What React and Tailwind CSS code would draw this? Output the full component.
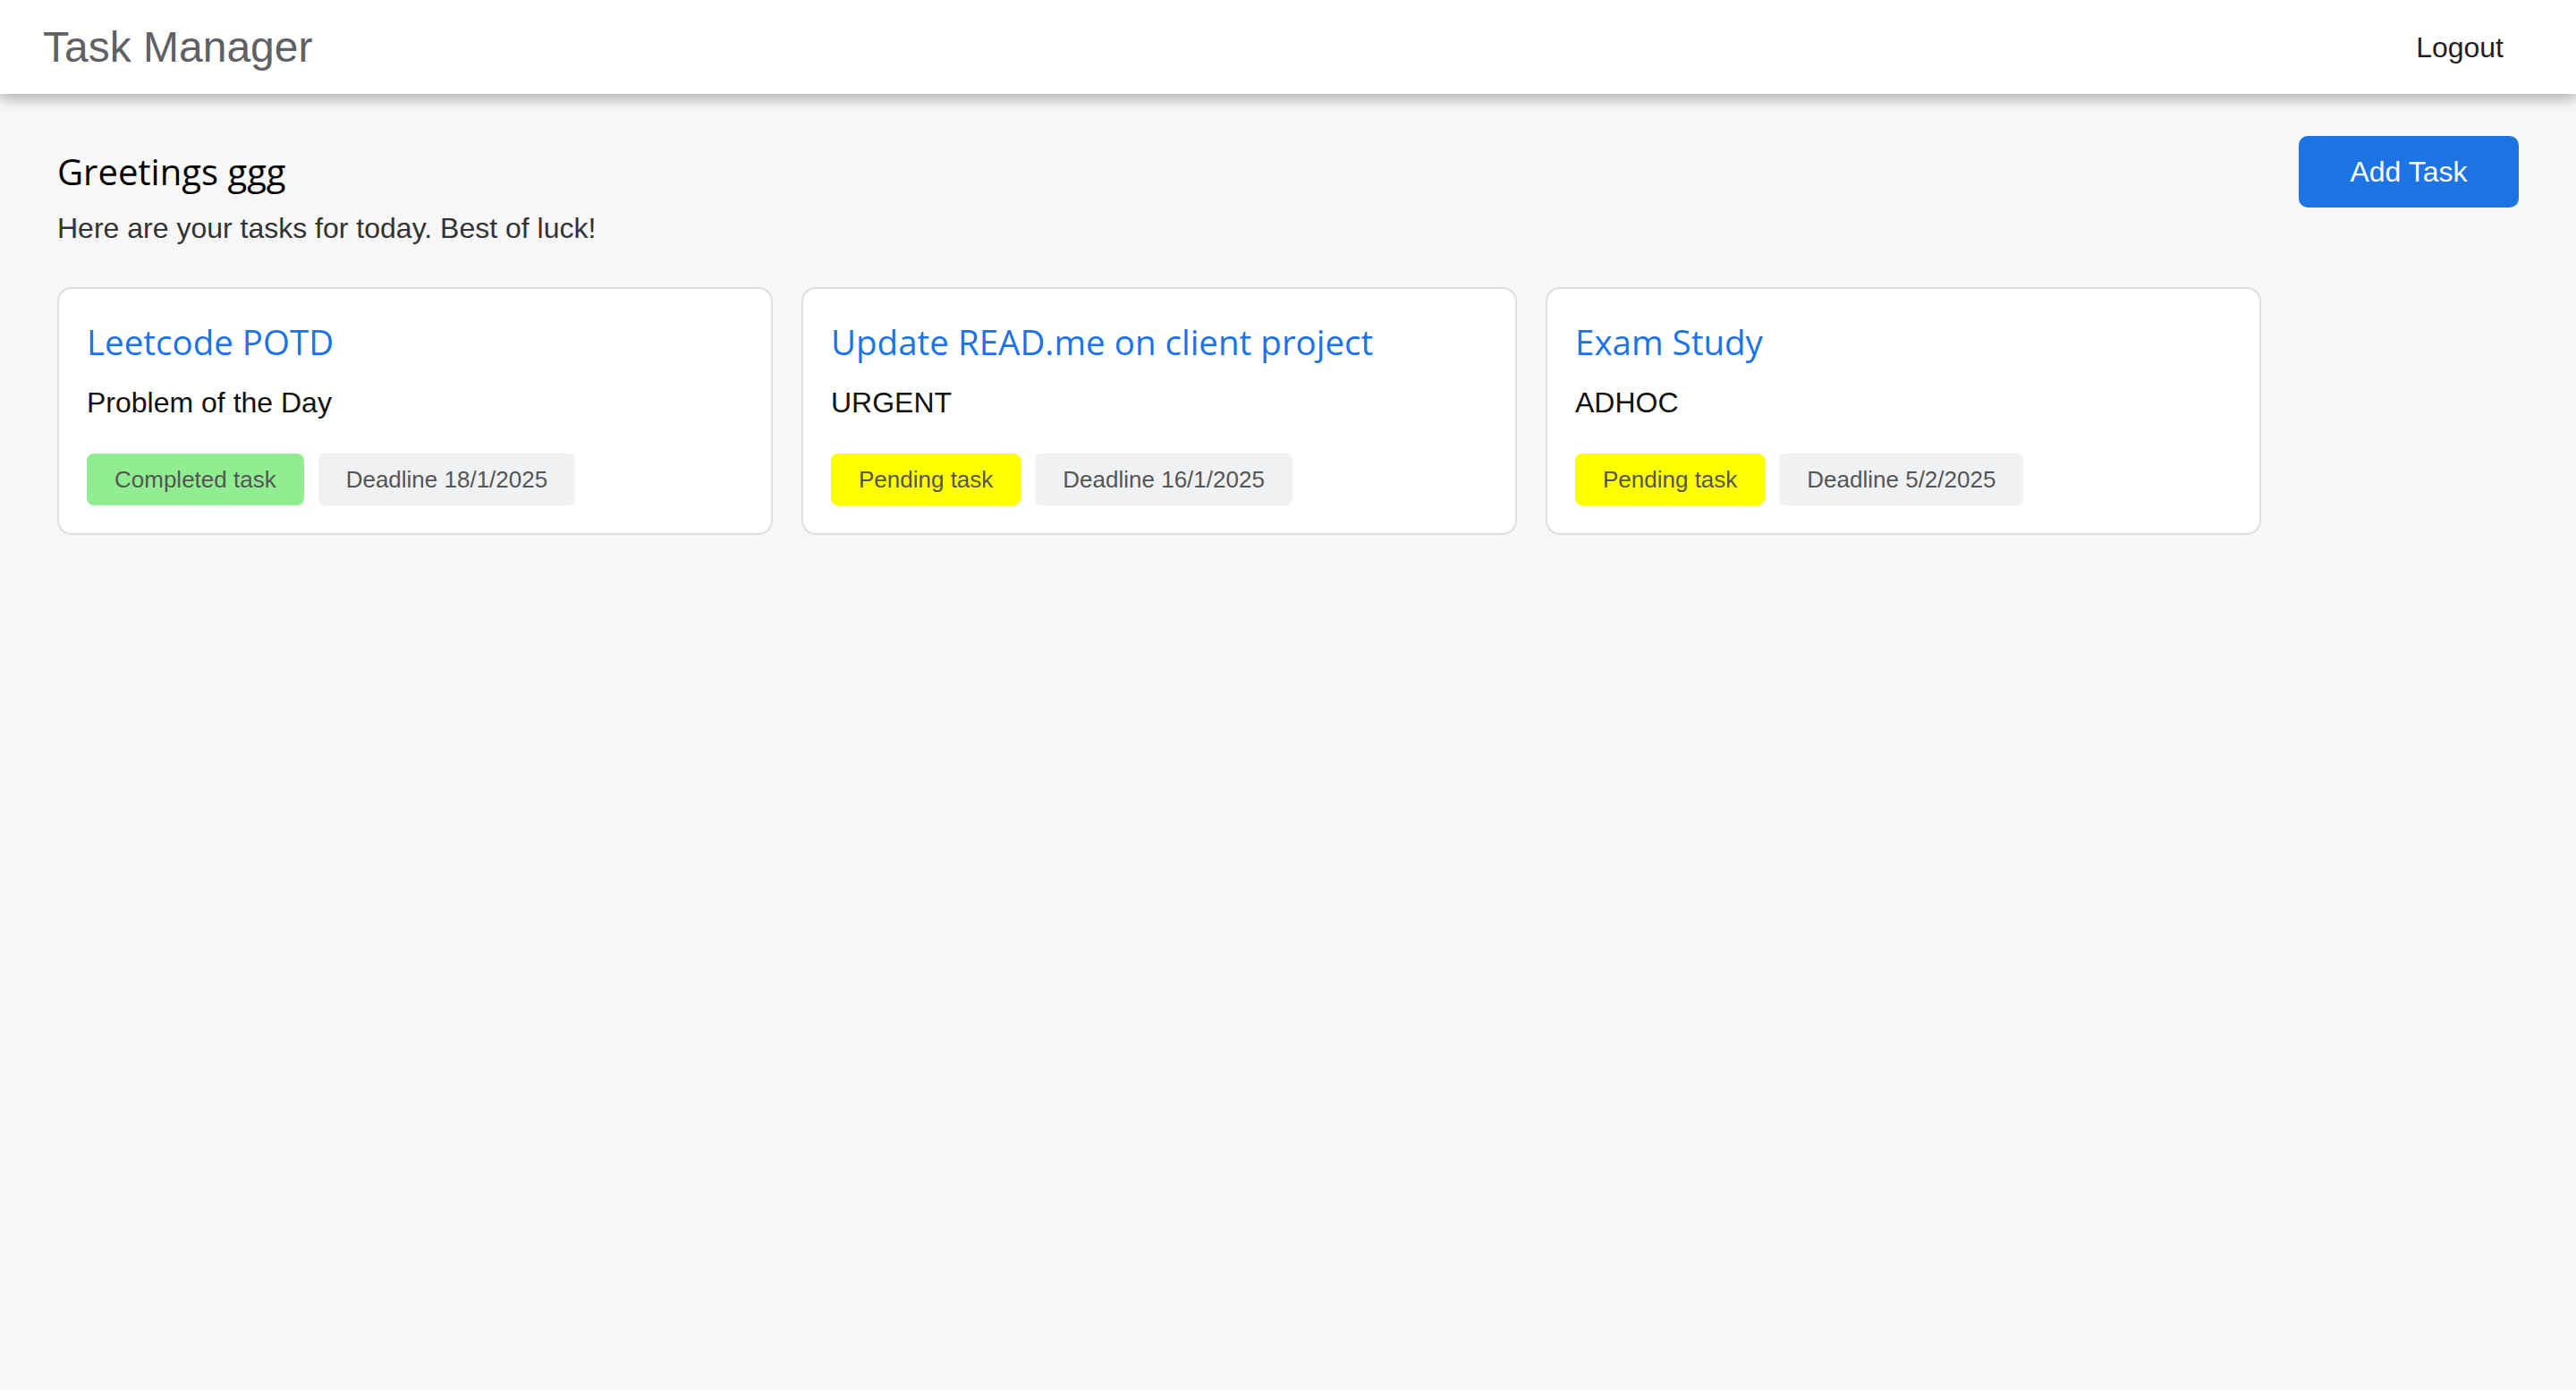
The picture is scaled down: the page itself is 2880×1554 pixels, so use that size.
const tasks = [
  { title: 'Leetcode POTD', desc: 'Problem of the Day', done: true, deadline: '18/1/2025' },
  { title: 'Update READ.me on client project', desc: 'URGENT', done: false, deadline: '16/1/2025' },
  { title: 'Exam Study', desc: 'ADHOC', done: false, deadline: '5/2/2025' },
];

const TaskCard = ({ task }) => (
  <div className="w-[800px] rounded-2xl border-2 border-[#dedede] bg-white px-[31px] pt-[33px] pb-[31px]">
    <h3 className="font-['Open_Sans',sans-serif] text-[38.5px] leading-[52px] text-[#1a73e8]">{task.title}</h3>
    <p className="mt-[24px] text-[32px] leading-[36px] text-[#111]">{task.desc}</p>
    <div className="mt-[39px] flex gap-4">
      <span
        className={
          task.done
            ? 'rounded-lg bg-[#90ee90] px-[31px] py-[14px] text-[26px] leading-[30px] text-[#555]'
            : 'rounded-lg bg-[#ffff00] px-[31px] py-[14px] text-[26px] leading-[30px] text-[#555]'
        }
      >
        {task.done ? 'Completed task' : 'Pending task'}
      </span>
      <span className="rounded-lg bg-[#f0f1f3] px-[31px] py-[14px] text-[26px] leading-[30px] text-[#555]">
        Deadline {task.deadline}
      </span>
    </div>
  </div>
);

export default function App() {
  return (
    <div className="min-h-screen bg-[#f7f7f7] font-['Liberation_Sans',Arial,sans-serif]">
      <header className="relative z-10 flex h-[105px] items-center justify-between bg-white pl-12 pr-[81px] shadow-[0_6px_14px_rgba(0,0,0,0.28)]">
        <h1 className="text-[48px] text-[#5f6164]">Task Manager</h1>
        <button className="text-[32px] text-[#1f1f1f]">Logout</button>
      </header>

      <main className="px-16 pt-[47px]">
        <div className="flex items-center justify-between">
          <h2 className="font-['Open_Sans',sans-serif] text-[40px] text-black">Greetings ggg</h2>
          <button className="h-[80px] w-[246px] rounded-[10px] bg-[#1d74e5] text-[32px] text-white">Add Task</button>
        </div>
        <p className="mt-[5px] text-[32px] leading-[36px] text-[#333]">Here are your tasks for today. Best of luck!</p>

        <div className="mt-[48px] flex flex-wrap gap-8">
          {tasks.map((t) => (
            <TaskCard key={t.title} task={t} />
          ))}
        </div>
      </main>
    </div>
  );
}
